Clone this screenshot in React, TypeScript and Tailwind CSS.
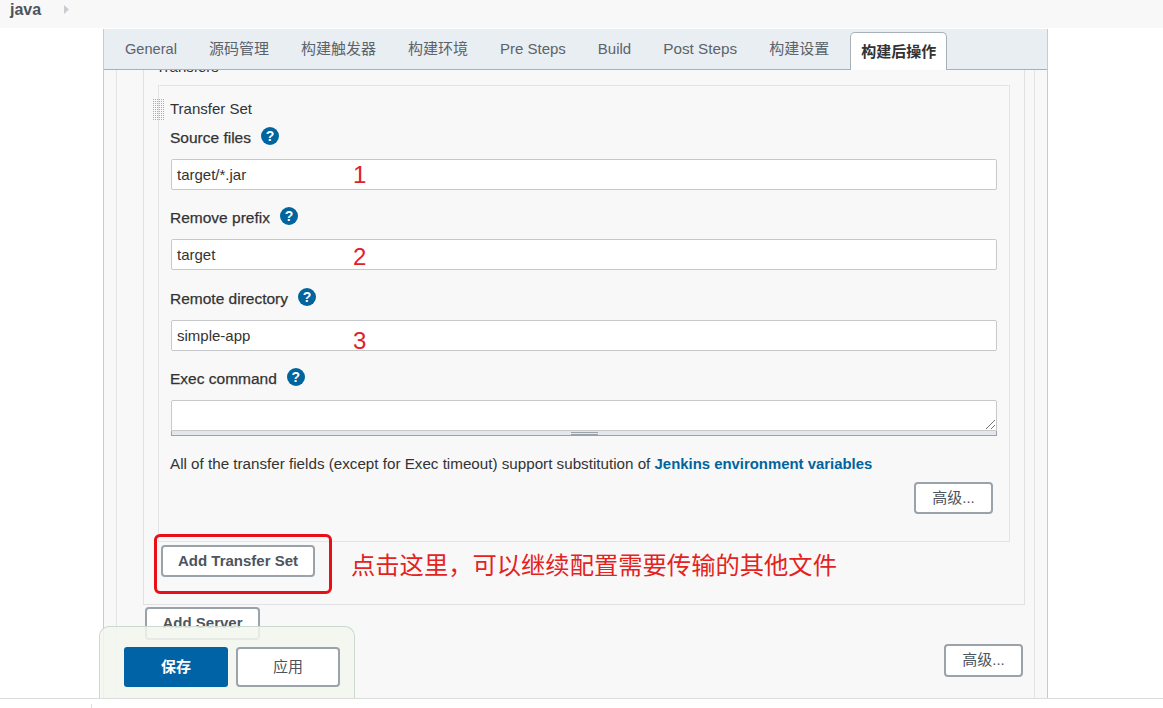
import React from "react";

const tabs = [
  { label: "General", size: "text-[14.6px]" },
  { label: "源码管理", size: "text-[15px]" },
  { label: "构建触发器", size: "text-[15px]" },
  { label: "构建环境", size: "text-[15px]" },
  { label: "Pre Steps", size: "text-[15px]" },
  { label: "Build", size: "text-[15px]" },
  { label: "Post Steps", size: "text-[15.3px]" },
  { label: "构建设置", size: "text-[15px]" },
];

const font = "font-['Liberation_Sans','Noto_Sans_CJK_SC',sans-serif]";

const HelpIcon = () => (
  <span className="flex h-[18px] w-[18px] items-center justify-center rounded-full bg-[#00649f] text-[14px] font-bold leading-none text-white">
    ?
  </span>
);

const GhostButton = ({ label, className }: { label: string; className?: string }) => (
  <button
    className={`flex items-center justify-center rounded-[4px] border-2 border-[#9aa3aa] bg-white text-[15px] text-[#4d545d] ${className ?? ""}`}
  >
    {label}
  </button>
);

const FieldLabel = ({ label }: { label: string }) => (
  <div className="flex h-[20px] items-center gap-[10px]">
    <span className="mt-[2px] text-[15.5px] text-[#333] [-webkit-text-stroke:0.25px_#333]">{label}</span>
    <span className="-mt-[2px]">
      <HelpIcon />
    </span>
  </div>
);

interface FieldProps {
  label: string;
  value: string;
  mark: string;
  markTop: string;
  gap: string;
}

const Field = ({ label, value, mark, markTop, gap }: FieldProps) => (
  <div className={gap}>
    <FieldLabel label={label} />
    <div className="relative ml-[1px] mt-[12px] flex h-[31px] w-[826px] items-center rounded-[2px] border border-[#c6c9cc] bg-white pl-[5px] pt-[1px] text-[15px] text-[#333]">
      {value}
      <span className={`absolute left-[181px] text-[24px] leading-none text-[#e0202a] ${markTop}`}>{mark}</span>
    </div>
  </div>
);

export default function App() {
  return (
    <div className={`relative flex h-[708px] w-[1163px] flex-col overflow-hidden bg-white ${font}`}>
      <div className="flex h-[28px] shrink-0 items-start bg-[#f8f8f8] pl-[10px]">
        <span className="text-[16px] font-bold leading-[19px] text-[#4d545d]">java</span>
        <svg className="ml-[23px] mt-[5px]" width="5" height="9" viewBox="0 0 5 9">
          <path d="M0 0l5 4.5L0 9z" fill="#c9ccd0" />
        </svg>
      </div>

      <div className="mt-[1px] ml-[103px] flex h-[669px] w-[945px] shrink-0 flex-col border-x border-[#c6cbd0] bg-[#f8f8f8]">
        <div className="flex h-[41px] shrink-0 items-end border-b border-[#a8b1b9] bg-[#e9eef2] pl-[5px]">
          {tabs.map((tab) => (
            <span key={tab.label} className={`flex h-[40px] items-center px-[16px] pt-[1px] text-[#5b636b] ${tab.size}`}>
              {tab.label}
            </span>
          ))}
          <span className="relative top-[1px] ml-[5px] flex h-[38px] w-[97px] items-center justify-center rounded-t-[5px] border border-b-0 border-[#a8b1b9] bg-white pt-[1px] text-[15px] font-bold text-[#333]">
            构建后操作
          </span>
        </div>

        <div className="flex-1 overflow-hidden">
          <div className="ml-[12px] mr-[12px] h-full border-x border-[#e2e4e6] pl-[26px] pr-[9px]">
            <div className="relative h-[535px] border-x border-b border-[#dfe1e3]">
              <div className="h-[15px] overflow-hidden pl-[12px]">
                <span className="-mt-[12px] block text-[15px] leading-[17px] text-[#333]">Transfers</span>
              </div>

              <div className="relative ml-[14px] h-[457px] w-[852px] border border-[#e2e4e6] pl-[11px] pt-[13px]">
                <svg className="absolute -left-[6px] top-[13px]" width="11" height="21">
                  <defs>
                    <pattern id="grip" width="2" height="2" patternUnits="userSpaceOnUse">
                      <rect width="1" height="1" fill="#a9adb1" />
                    </pattern>
                  </defs>
                  <rect width="11" height="21" fill="url(#grip)" />
                </svg>

                <div className="h-[20px] text-[15px] leading-[20px] text-[#333]">Transfer Set</div>

                <Field label="Source files" value="target/*.jar" mark="1" markTop="top-[3px]" gap="mt-[8px]" />
                <Field label="Remove prefix" value="target" mark="2" markTop="top-[5px]" gap="mt-[17px]" />
                <Field label="Remote directory" value="simple-app" mark="3" markTop="top-[8px]" gap="mt-[18px]" />

                <div className="mt-[17px]">
                  <FieldLabel label="Exec command" />
                  <div className="relative ml-[1px] mt-[12px] h-[31px] w-[826px] rounded-t-[2px] border border-[#c6c9cc] bg-white">
                    <svg className="absolute bottom-0 right-0" width="11" height="11" viewBox="0 0 11 11">
                      <path d="M1 10L10 1M6 10l4-4" stroke="#777" strokeWidth="1" />
                    </svg>
                  </div>
                  <div className="ml-[1px] flex h-[5px] w-[826px] items-center justify-center border-x border-b border-[#9aa3aa] bg-[#e4e8ec]">
                    <span className="h-[3px] w-[27px] border-y border-[#9aa3aa]" />
                  </div>
                </div>

                <p className="mt-[18px] whitespace-nowrap text-[15.2px] leading-[20px] text-[#333]">
                  All of the transfer fields (except for Exec timeout) support substitution of{" "}
                  <span className="text-[14.9px] font-bold text-[#00649f]">Jenkins environment variables</span>
                </p>

                <div className="mt-[8px] flex w-[823px] justify-end">
                  <GhostButton label="高级..." className="h-[32px] w-[79px]" />
                </div>
              </div>

              <div className="ml-[17px] mt-[3px] flex items-start">
                <GhostButton label="Add Transfer Set" className="h-[32px] w-[154px] font-bold" />
                <span className="ml-[36px] mt-[5px] text-[24.3px] leading-[32px] text-[#e4231e]">
                  点击这里，可以继续配置需要传输的其他文件
                </span>
              </div>

              <div className="absolute left-[10px] top-[464px] h-[60px] w-[178px] rounded-[6px] border-[3px] border-[#ea0f16]" />
            </div>

            <div className="flex items-start justify-between pl-[2px]">
              <GhostButton label="Add Server" className="mt-[2px] h-[33px] w-[115px] font-bold" />
              <GhostButton label="高级..." className="mr-[2px] mt-[39px] h-[33px] w-[79px]" />
            </div>
          </div>
        </div>
      </div>

      <div className="flex-1 border-t border-[#dcdcdc] bg-white pl-[91px]">
        <span className="mt-[5px] block h-[5px] w-px bg-[#ddd]" />
      </div>

      <div className="absolute left-[99px] top-[626px] flex h-[72px] w-[256px] items-start gap-[8px] rounded-t-[10px] border border-b-0 border-[#cbd9cf] bg-[#f3f7ef]/85 pl-[24px] pt-[20px]">
        <button className="flex h-[40px] w-[104px] items-center justify-center rounded-[3px] bg-[#0063a5] pt-[1px] text-[15px] font-bold text-white">
          保存
        </button>
        <GhostButton label="应用" className="h-[40px] w-[104px] pt-[1px]" />
      </div>
    </div>
  );
}
